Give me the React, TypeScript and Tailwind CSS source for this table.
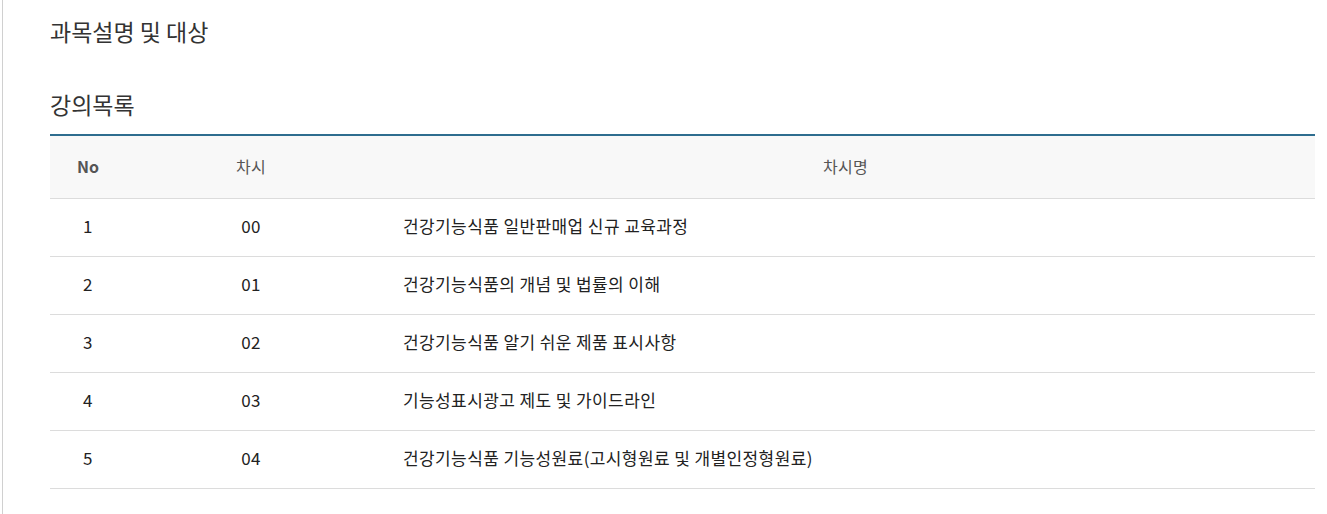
import React from "react";

const rows = [
  ["1", "00", "건강기능식품 일반판매업 신규 교육과정"],
  ["2", "01", "건강기능식품의 개념 및 법률의 이해"],
  ["3", "02", "건강기능식품 알기 쉬운 제품 표시사항"],
  ["4", "03", "기능성표시광고 제도 및 가이드라인"],
  ["5", "04", "건강기능식품 기능성원료(고시형원료 및 개별인정형원료)"],
];

export default function App() {
  return (
    <div
      className="w-[1327px] h-[514px] bg-white flex"
      style={{ fontFamily: '"Noto Sans CJK KR", "Noto Sans", sans-serif' }}
    >
      <div className="ml-[2px] w-px bg-[#d0d0d0] h-full" />
      <div className="ml-[47px] w-[1265px]">
        <h2 className="mt-[15px] text-[23px] leading-[32px] text-[#333] font-normal">과목설명 및 대상</h2>
        <h2 className="mt-[41px] text-[23px] leading-[32px] text-[#333] font-normal">강의목록</h2>
        <div className="mt-[14px] border-t-2 border-[#2e6d8f]">
          <div className="flex h-[63px] pb-[2px] items-center bg-[#f8f8f8] border-b border-[#dcdcdc] text-[16px] tracking-[0.3px] text-[#555]">
            <div className="w-[76px] text-center font-bold tracking-normal">No</div>
            <div className="w-[250px] text-center">차시</div>
            <div className="flex-1 text-center">차시명</div>
          </div>
          {rows.map((r) => (
            <div key={r[0]} className="flex h-[58px] pb-[3px] items-center border-b border-[#dcdcdc] text-[17px] tracking-[0.4px] text-[#222]">
              <div className="w-[76px] text-center">{r[0]}</div>
              <div className="w-[250px] text-center">{r[1]}</div>
              <div className="flex-1 pl-[27px]">{r[2]}</div>
            </div>
          ))}
        </div>
      </div>
    </div>
  );
}
